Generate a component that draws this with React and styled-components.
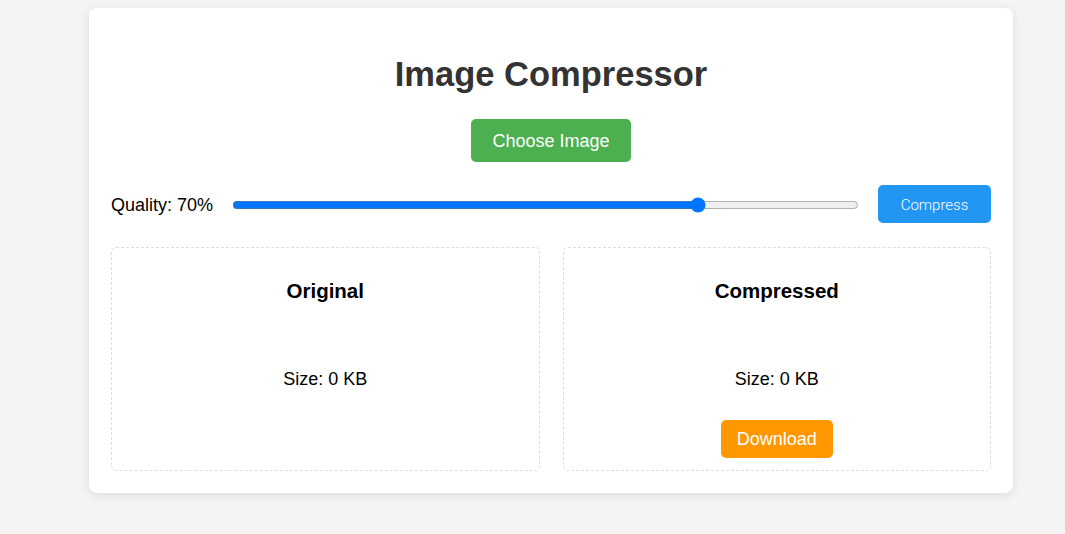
import { useState } from 'react';
import styled, { createGlobalStyle } from 'styled-components';

const GlobalStyle = createGlobalStyle`
  html, body {
    margin: 0;
    padding: 0;
    background-color: #f4f4f4;
    font-family: "Liberation Sans", Arial, sans-serif;
  }
`;

const Page = styled.div`
  display: flex;
  padding: 8px 52px 42px 89px;
`;

const Card = styled.div`
  flex: 1;
  background-color: #fff;
  border-radius: 8px;
  box-shadow: 0 2px 10px rgba(0, 0, 0, 0.1);
  padding: 22px;
  display: flex;
  flex-direction: column;
  align-items: center;
`;

const Title = styled.h1`
  margin: 25px 0 0;
  font-size: 34.5px;
  line-height: 39px;
  font-weight: bold;
  color: #333;
`;

const Button = styled.button`
  border: none;
  border-radius: 5px;
  color: #fff;
  cursor: pointer;
  background-color: ${(p) => p.$bg};
  font-family: "Liberation Sans", Arial, sans-serif;
  font-size: 18px;
  line-height: 21px;
`;

const ChooseButton = styled(Button)`
  margin-top: 25px;
  padding: 12px 21px 10px;
  height: 43px;
`;

const CompressButton = styled(Button)`
  font-family: Roboto, sans-serif;
  font-weight: 300;
  font-size: 15px;
  line-height: 18px;
  padding: 11px 22px 9px;
  width: 113px;
  height: 38px;
`;

const DownloadButton = styled(Button)`
  margin-top: 32px;
  padding: 9px 16px 8px;
  height: 38px;
`;

const QualityRow = styled.div`
  align-self: stretch;
  margin-top: 23px;
  display: flex;
  align-items: center;
  gap: 19px;
`;

const Label = styled.label`
  font-size: 18px;
  line-height: 20px;
  padding-top: 2px;
  color: #000;
`;

const Slider = styled.input`
  flex: 1;
  margin: 2px 0 0;
  accent-color: #0075ff;
`;

const Panels = styled.div`
  align-self: stretch;
  margin-top: 24px;
  display: grid;
  grid-template-columns: 1fr 1fr;
  gap: 23px;
`;

const Panel = styled.div`
  border: 1px dashed #ddd;
  border-radius: 5px;
  padding: 20px 10px 12px;
  display: flex;
  flex-direction: column;
  align-items: center;
`;

const PanelTitle = styled.h3`
  margin: 11px 0 0;
  font-size: 20.5px;
  line-height: 23px;
  font-weight: bold;
  color: #000;
`;

const Size = styled.p`
  margin: 68px 0 0;
  font-size: 18px;
  line-height: 18px;
  color: #000;
`;

function App() {
  const [quality, setQuality] = useState(70);

  return (
    <Page>
      <GlobalStyle />
      <Card>
        <Title>Image Compressor</Title>
        <ChooseButton $bg="#4caf50">Choose Image</ChooseButton>
        <QualityRow>
          <Label>Quality: {quality}%</Label>
          <Slider
            type="range"
            min="10"
            max="90"
            value={quality}
            onChange={(e) => setQuality(Number(e.target.value))}
          />
          <CompressButton $bg="#2196f3">Compress</CompressButton>
        </QualityRow>
        <Panels>
          <Panel>
            <PanelTitle>Original</PanelTitle>
            <Size>Size: 0 KB</Size>
          </Panel>
          <Panel>
            <PanelTitle>Compressed</PanelTitle>
            <Size>Size: 0 KB</Size>
            <DownloadButton $bg="#ff9800">Download</DownloadButton>
          </Panel>
        </Panels>
      </Card>
    </Page>
  );
}

export default App;
